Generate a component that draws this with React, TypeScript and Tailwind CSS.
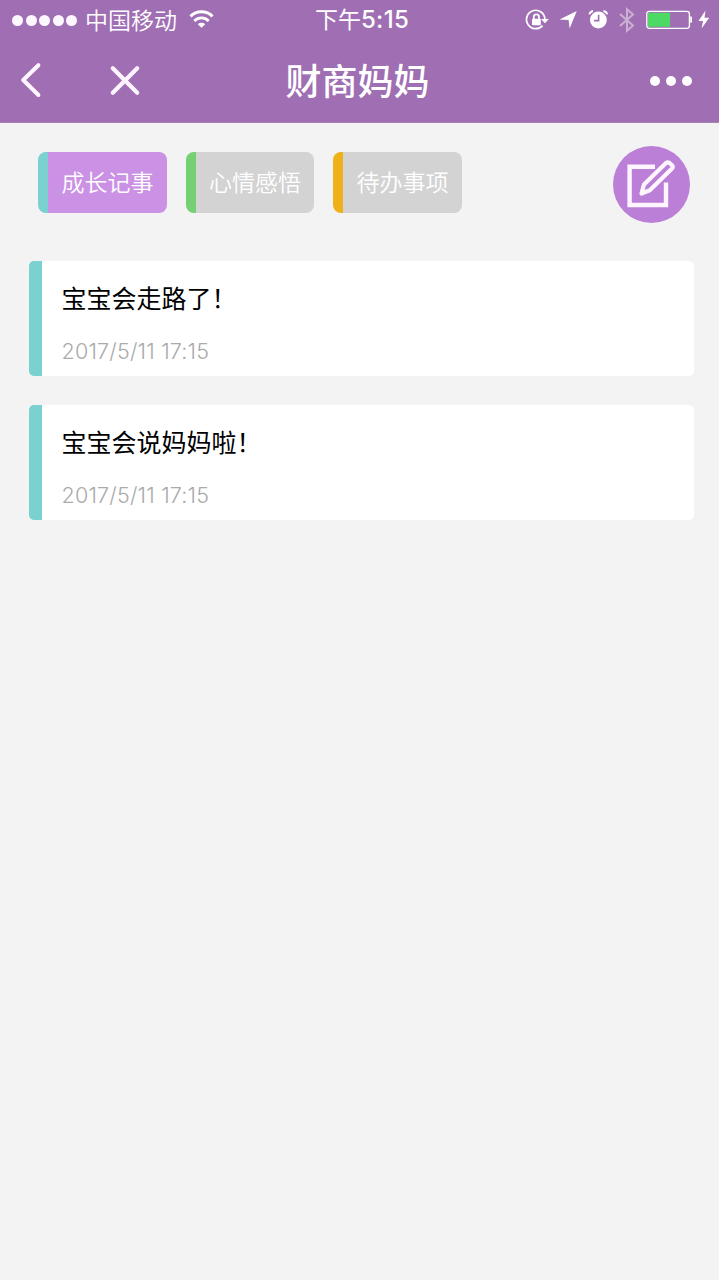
const cjk = "font-['Inter','Noto_Sans_CJK_SC',sans-serif]";

function StatusBar() {
  return (
    <div className="flex h-10 items-center justify-between text-white">
      <div className="flex w-[240px] items-center pl-3">
        <div className="flex gap-[2.5px]">
          {[0, 1, 2, 3, 4].map((i) => (
            <span key={i} className="size-[11px] rounded-full bg-[#fdf8ff]" />
          ))}
        </div>
        <span className="ml-[8px] pt-px text-[23px] leading-10 font-[350] whitespace-nowrap">中国移动</span>
        <svg className="ml-[12px]" width="25" height="20" viewBox="0 0 25 20" fill="none" stroke="white">
          <path d="M1.5 6.4 A15.6 15.6 0 0 1 23.5 6.4" strokeWidth="3" />
          <path d="M5.3 10.9 A10.3 10.3 0 0 1 19.7 10.9" strokeWidth="2.8" />
          <path d="M8.8 14.2 A5.4 5.4 0 0 1 16.2 14.2 L12.5 17.8 Z" fill="white" stroke="none" />
        </svg>
      </div>
      <div className="w-[244px] text-center text-[23px] leading-10 whitespace-nowrap">
        下午<span className="text-[24px] font-medium tracking-[0.3px]">5:15</span>
      </div>
      <div className="flex w-[235px] items-center justify-end pr-[9px]">
        <svg width="25" height="24" viewBox="0 0 25 24" fill="none" stroke="white" strokeWidth="1.7">
          <path d="M18.6 17.6 A9.2 9.2 0 1 1 20.9 11.2" />
          <path d="M17 11 H24.8 L20.9 15.2 Z" fill="white" stroke="none" />
          <rect x="8" y="10.8" width="8.8" height="6.5" rx="0.8" fill="white" stroke="none" />
          <path d="M9.8 11.5 V9 A2.6 2.6 0 0 1 15 9 V11.5" />
        </svg>
        <svg className="ml-[10px]" width="18" height="18" viewBox="0 0 18 18" fill="white">
          <path d="M17.8 0 L10.6 17.5 L9.6 8.9 L0.5 8.5 Z" />
        </svg>
        <svg className="ml-[11px]" width="20" height="20" viewBox="0 0 20 20">
          <circle cx="10.4" cy="10" r="8.4" fill="white" />
          <path d="M10.6 4.7 V10.6 H6" fill="none" stroke="#a06fb3" strokeWidth="1.6" />
          <path d="M1.4 4.4 Q2 1.6 5 1 M15.4 1 Q18.6 1.6 19.2 4.4" fill="none" stroke="white" strokeWidth="1.8" />
        </svg>
        <svg className="ml-[10px] opacity-45" width="18" height="26" viewBox="0 0 18 26" fill="none" stroke="white" strokeWidth="2">
          <path d="M2 7 L15 18.5 L9 23.7 V2.3 L15 7.5 L2 19" />
        </svg>
        <svg className="ml-[10px]" width="46" height="20" viewBox="0 0 46 20">
          <rect x="0.8" y="1.3" width="42.6" height="17" rx="2.5" fill="none" stroke="white" strokeWidth="1.3" />
          <path d="M2 2.8 H24 V16.8 H2 Z" fill="#4cd964" />
          <path d="M44.2 6.3 Q47 6.7 47 9.6 Q47 12.5 44.2 12.8 Z" fill="white" />
        </svg>
        <svg className="ml-[6px]" width="12" height="20" viewBox="0 0 12 20" fill="white">
          <path d="M7.5 0.5 L0.5 11 H5 L3.6 18.5 L11.2 7.8 H6.5 Z" />
        </svg>
      </div>
    </div>
  );
}

function NavBar() {
  return (
    <div className="flex h-[83px] items-center border-b border-[#a582b0] text-white">
      <div className="flex w-[240px] items-center pb-[2px] pl-[20px]">
        <svg width="22" height="36" viewBox="0 0 22 36" fill="none" stroke="#fdf5ff" strokeWidth="4" strokeLinecap="round" strokeLinejoin="round">
          <path d="M18.4 3.2 L3.2 18 L18.4 33" />
        </svg>
        <svg className="ml-[67px]" width="32" height="32" viewBox="0 0 32 32" fill="none" stroke="#fdf5ff" strokeWidth="4.2" strokeLinecap="round">
          <path d="M3.8 4.3 L28.2 28.7 M28.2 4.3 L3.8 28.7" />
        </svg>
      </div>
      <h1 className="w-[235px] pt-px text-center text-[36px] leading-[80px] font-medium whitespace-nowrap">财商妈妈</h1>
      <div className="flex flex-1 justify-end gap-[6px] pr-[27px] pb-px">
        {[0, 1, 2].map((i) => (
          <span key={i} className="size-[10px] rounded-full bg-white" />
        ))}
      </div>
    </div>
  );
}

const tabs = [
  { label: "成长记事", style: "border-[#7bd0d0] bg-[#cb91e5]" },
  { label: "心情感悟", style: "border-[#74d072] bg-[#d3d3d3]" },
  { label: "待办事项", style: "border-[#eeb11a] bg-[#d3d3d3]" },
];

const notes = [
  { title: "宝宝会走路了！", time: "2017/5/11 17:15" },
  { title: "宝宝会说妈妈啦！", time: "2017/5/11 17:15" },
];

export default function App() {
  return (
    <div className={`min-h-screen w-full bg-[#f3f3f3] ${cjk}`}>
      <header className="bg-[#a06fb3]">
        <StatusBar />
        <NavBar />
      </header>
      <main>
        <div className="flex h-[138px] items-start pt-[23px] pr-[29px] pl-[38px]">
          <div className="flex gap-[19px] pt-[6px]">
            {tabs.map((t) => (
              <button
                key={t.label}
                className={`h-[61px] w-[128.5px] rounded-[8px] border-l-[10px] pl-[13.5px] text-left text-[23px] leading-[60px] font-[350] whitespace-nowrap text-white ${t.style}`}
              >
                {t.label}
              </button>
            ))}
          </div>
          <button className="ml-auto size-[77px] rounded-full bg-[#bb7fd8]" aria-label="edit">
            <svg width="77" height="77" viewBox="0 0 77 77" fill="none" stroke="#fff5ff" strokeWidth="4.4">
              <path d="M42 20.8 H16.6 V59 H53 V36.5" />
              <path d="M28.5 47.5 L31 38.5 L53 17 Q54.8 15.6 56.6 17 L59 19.2 Q60.4 20.8 59 22.6 L36.8 44.3 Z" strokeWidth="4.2" strokeLinejoin="round" />
            </svg>
          </button>
        </div>
        <div className="flex flex-col gap-[29px] pr-[25px] pl-[29px]">
          {notes.map((n) => (
            <article key={n.title} className="h-[115px] rounded-[5px] border-l-[13px] border-[#7bd0d0] bg-white pl-[19.5px]">
              <h2 className="pt-[19px] text-[25px] leading-[38px] whitespace-nowrap text-black">{n.title}</h2>
              <p className="pt-[18px] text-[21.5px] leading-[30px] font-[350] tracking-[0.2px] whitespace-nowrap text-[#aaa]">{n.time}</p>
            </article>
          ))}
        </div>
      </main>
    </div>
  );
}
